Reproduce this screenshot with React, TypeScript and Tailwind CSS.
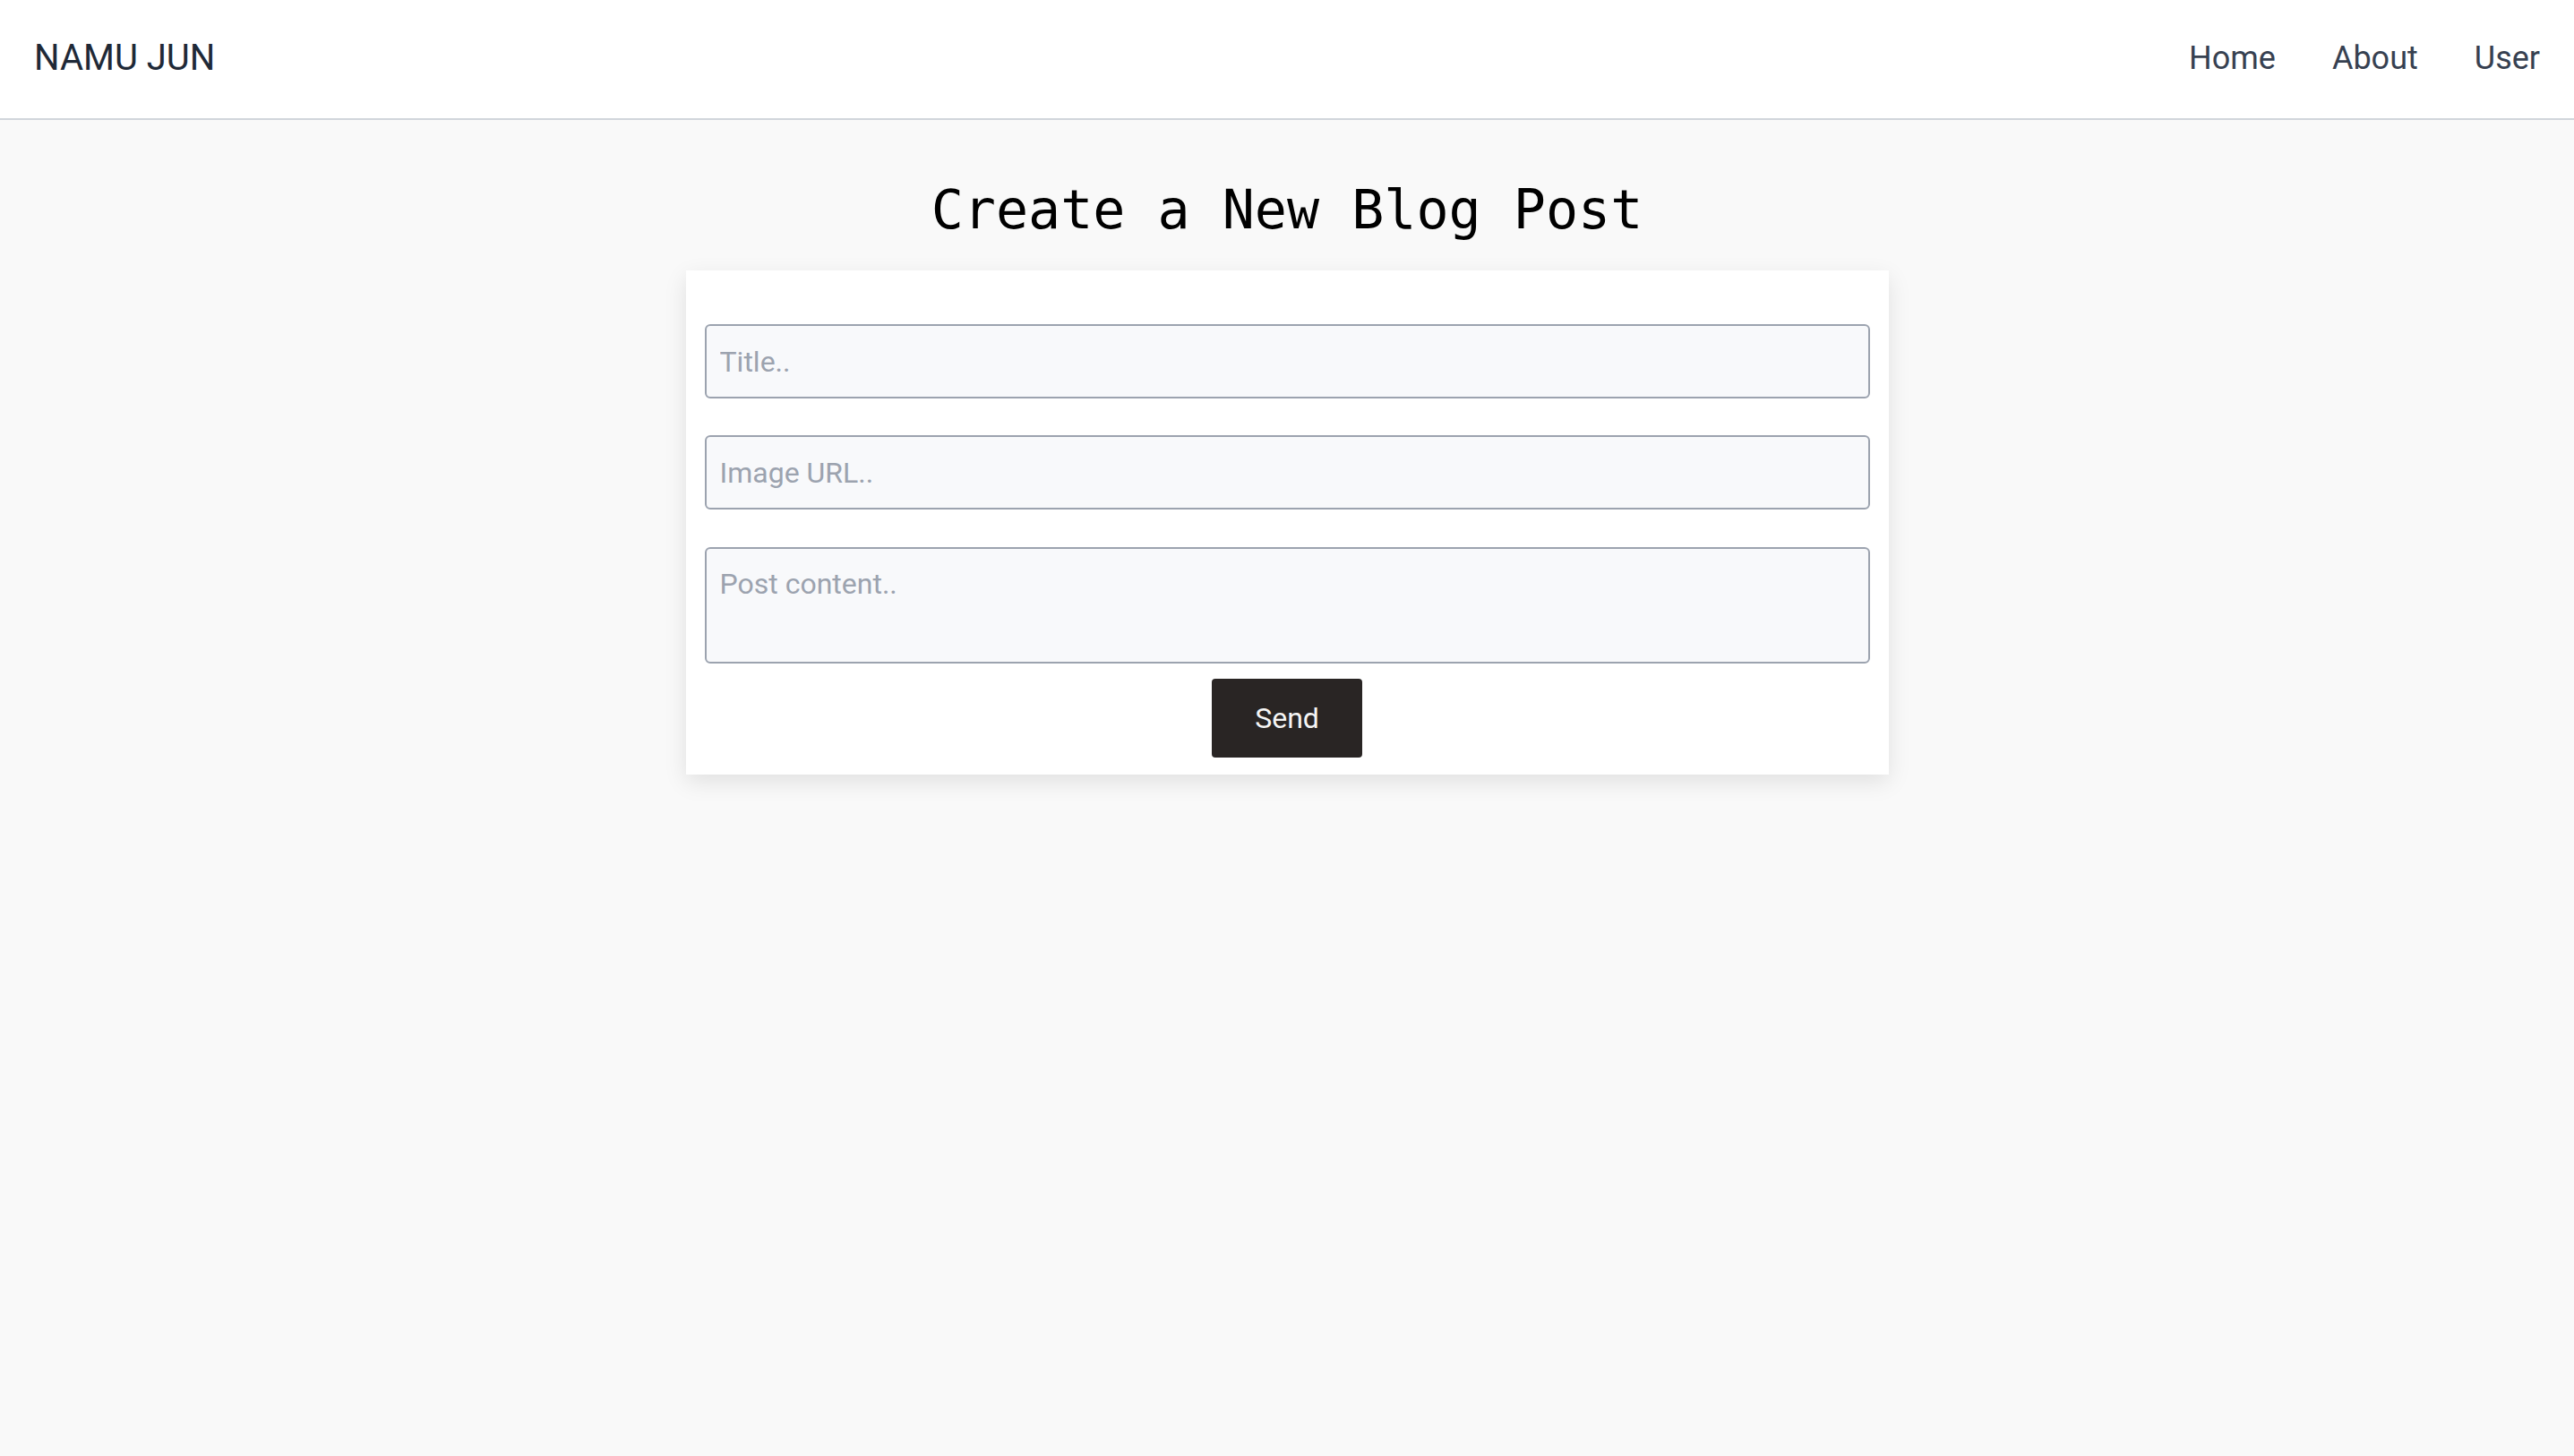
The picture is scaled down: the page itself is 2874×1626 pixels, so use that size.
export default function App() {
  return (
    <div className="min-h-screen bg-[#f9f9f9] font-['Roboto',sans-serif]">
      {/* Header */}
      <header className="flex h-[134px] items-center justify-between border-b-2 border-[#d1d5db] bg-white px-[38px] pb-[3px]">
        <a href="#" className="text-[40px] text-[#1f2937]">NAMU JUN</a>
        <nav className="flex gap-[63px] text-[36px] text-[#374151]">
          <a href="#">Home</a>
          <a href="#">About</a>
          <a href="#">User</a>
        </nav>
      </header>

      <main className="flex flex-col items-center pt-[55px]">
        <h1 className="font-['DejaVu_Sans_Mono',monospace] text-[60px] leading-[90px] text-black">
          Create a New Blog Post
        </h1>

        <form className="mt-[23px] flex w-[1343px] flex-col items-center bg-white px-[21px] pt-[60px] pb-[19px] shadow-[0_8px_24px_rgba(0,0,0,0.1)]">
          <input
            type="text"
            placeholder="Title.."
            className="h-[83px] w-full rounded-[6px] border-2 border-[#9ca3af] bg-[#f8f9fb] px-[15px] text-[32px] placeholder:text-[#9ca3af] outline-none"
          />
          <input
            type="text"
            placeholder="Image URL.."
            className="mt-[41px] h-[83px] w-full rounded-[6px] border-2 border-[#9ca3af] bg-[#f8f9fb] px-[15px] text-[32px] placeholder:text-[#9ca3af] outline-none"
          />
          <textarea
            placeholder="Post content.."
            className="mt-[42px] h-[130px] w-full resize-none rounded-[6px] border-2 border-[#9ca3af] bg-[#f8f9fb] p-[15px] text-[32px] leading-[1.5] placeholder:text-[#9ca3af] outline-none"
          />
          <button
            type="button"
            className="mt-[17px] h-[88px] w-[168px] rounded-[4px] bg-[#292524] text-[32px] text-[#f5f5f5]"
          >
            Send
          </button>
        </form>
      </main>
    </div>
  )
}
